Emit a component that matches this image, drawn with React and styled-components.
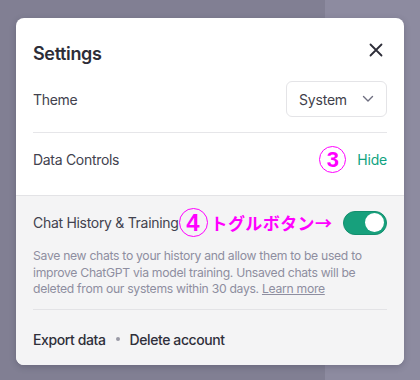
import React from 'react';
import styled, { createGlobalStyle } from 'styled-components';

const Global = createGlobalStyle`
  html, body { margin: 0; padding: 0; }
  body {
    width: 420px;
    height: 380px;
    overflow: hidden;
    background: linear-gradient(to right, #817f93 325px, #8d8ba0 325px);
    font-family: Inter, "Noto Sans", sans-serif;
    color: #343541;
  }
`;

const Page = styled.div`
  padding: 18px 16px 0 16px;
`;

const Card = styled.div`
  width: 388px;
  height: 347px;
  background: #fff;
  border-radius: 8px;
  overflow: hidden;
  display: flex;
  flex-direction: column;
  box-shadow: 0 2px 6px rgba(40, 38, 60, 0.25);
`;

const Header = styled.div`
  display: flex;
  align-items: center;
  justify-content: space-between;
  padding: 22px 17px 0 17px;
  height: 26px;
`;

const Title = styled.h2`
  margin: 0;
  font-size: 18px;
  font-weight: 600;
  letter-spacing: -0.35px;
  color: #2d2d38;
`;

const Close = styled.button`
  border: 0;
  background: none;
  padding: 0;
  width: 14px;
  height: 14px;
  margin-right: 4px;
  margin-top: -6px;
  display: flex;
`;

const Section = styled.div`
  padding: 0 17px;
`;

const Row = styled.div`
  display: flex;
  align-items: center;
  justify-content: space-between;
  padding: ${p => p.$pad || '0'};
  border-bottom: ${p => (p.$line ? '1px solid #e6e6e9' : 'none')};
  font-size: 14px;
`;

const Label = styled.span`
  font-size: 14px;
  letter-spacing: -0.3px;
  color: #42424e;
  display: flex;
  align-items: center;
`;

const Select = styled.div`
  width: 101px;
  height: 36px;
  box-sizing: border-box;
  border: 1px solid #e4e4e7;
  border-radius: 6px;
  display: flex;
  align-items: center;
  justify-content: space-between;
  padding: 0 12px 0 12px;
  font-size: 14px;
  letter-spacing: -0.2px;
  color: #3f3f4b;
`;

const Right = styled.div`
  display: flex;
  align-items: center;
  gap: 11px;
`;

const HideLink = styled.span`
  color: #10a37f;
  font-size: 14px;
  letter-spacing: -0.2px;
`;

const Circled = styled.span`
  box-sizing: border-box;
  width: ${p => p.$size}px;
  height: ${p => p.$size}px;
  border: 1.5px solid #ff00ff;
  border-radius: 50%;
  color: #ff00ff;
  display: inline-flex;
  align-items: center;
  justify-content: center;
  font-family: "Liberation Sans", sans-serif;
  font-weight: 700;
  font-size: ${p => p.$font}px;
  letter-spacing: 0;
  line-height: 1;
  flex-shrink: 0;
`;

const Note = styled.span`
  color: #ff00ff;
  font-family: "Noto Sans CJK JP", sans-serif;
  font-weight: 700;
  font-size: 17px;
  letter-spacing: 0.4px;
  margin-left: 3px;
`;

const Gray = styled.div`
  flex: 1;
  background: #f4f4f5;
  border-top: 1px solid #e3e3e6;
  padding: 12px 17px 0 17px;
`;

const Toggle = styled.div`
  width: 44px;
  height: 24px;
  box-sizing: border-box;
  border-radius: 12px;
  background: #17a07c;
  border: 1px solid #138f6e;
  display: flex;
  align-items: center;
  justify-content: flex-end;
  padding: 2px;
`;

const Knob = styled.div`
  width: 19px;
  height: 19px;
  border-radius: 50%;
  background: #fff;
`;

const Desc = styled.p`
  margin: 11px 0 0 0;
  padding-bottom: 11px;
  border-bottom: 1px solid #e3e3e6;
  font-size: 12.2px;
  line-height: 16.5px;
  color: #8e8ea0;
  letter-spacing: -0.3px;
`;

const Learn = styled.a`
  color: #8e8ea0;
  text-decoration: underline;
`;

const Footer = styled.div`
  display: flex;
  align-items: center;
  gap: 8px;
  padding-top: 21px;
  font-size: 14px;
  font-weight: 500;
  letter-spacing: -0.4px;
  color: #2f2f3a;
`;

const Dot = styled.span`
  width: 4px;
  height: 4px;
  border-radius: 50%;
  background: #9a9aa6;
  margin: 0 2px;
`;

export default function App() {
  return (
    <>
      <Global />
      <Page>
        <Card>
          <Header>
            <Title>Settings</Title>
            <Close aria-label="close">
              <svg width="14" height="14" viewBox="0 0 14 14">
                <path d="M1.5 1.5 L12.5 12.5 M12.5 1.5 L1.5 12.5" stroke="#2d2d38" strokeWidth="1.8" strokeLinecap="round" />
              </svg>
            </Close>
          </Header>
          <Section>
            <Row $pad="15px 0 15px 0" $line>
              <Label>Theme</Label>
              <Select>
                System
                <svg width="12" height="8" viewBox="0 0 12 8">
                  <path d="M1.5 1.5 L6 6 L10.5 1.5" fill="none" stroke="#6e6e80" strokeWidth="1.4" strokeLinecap="round" strokeLinejoin="round" />
                </svg>
              </Select>
            </Row>
            <Row $pad="13px 0 22px 0">
              <Label>Data Controls</Label>
              <Right>
                <Circled $size={27} $font={22}>3</Circled>
                <HideLink>Hide</HideLink>
              </Right>
            </Row>
          </Section>
          <Gray>
            <Row>
              <Label>
                Chat History &amp; Training
                <Circled $size={29} $font={24}>4</Circled>
                <Note>トグルボタン→</Note>
              </Label>
              <Toggle>
                <Knob />
              </Toggle>
            </Row>
            <Desc>
              Save new chats to your history and allow them to be used to improve ChatGPT via model training. Unsaved chats will be deleted from our systems within 30 days. <Learn>Learn more</Learn>
            </Desc>
            <Footer>
              <span>Export data</span>
              <Dot />
              <span>Delete account</span>
            </Footer>
          </Gray>
        </Card>
      </Page>
    </>
  );
}
